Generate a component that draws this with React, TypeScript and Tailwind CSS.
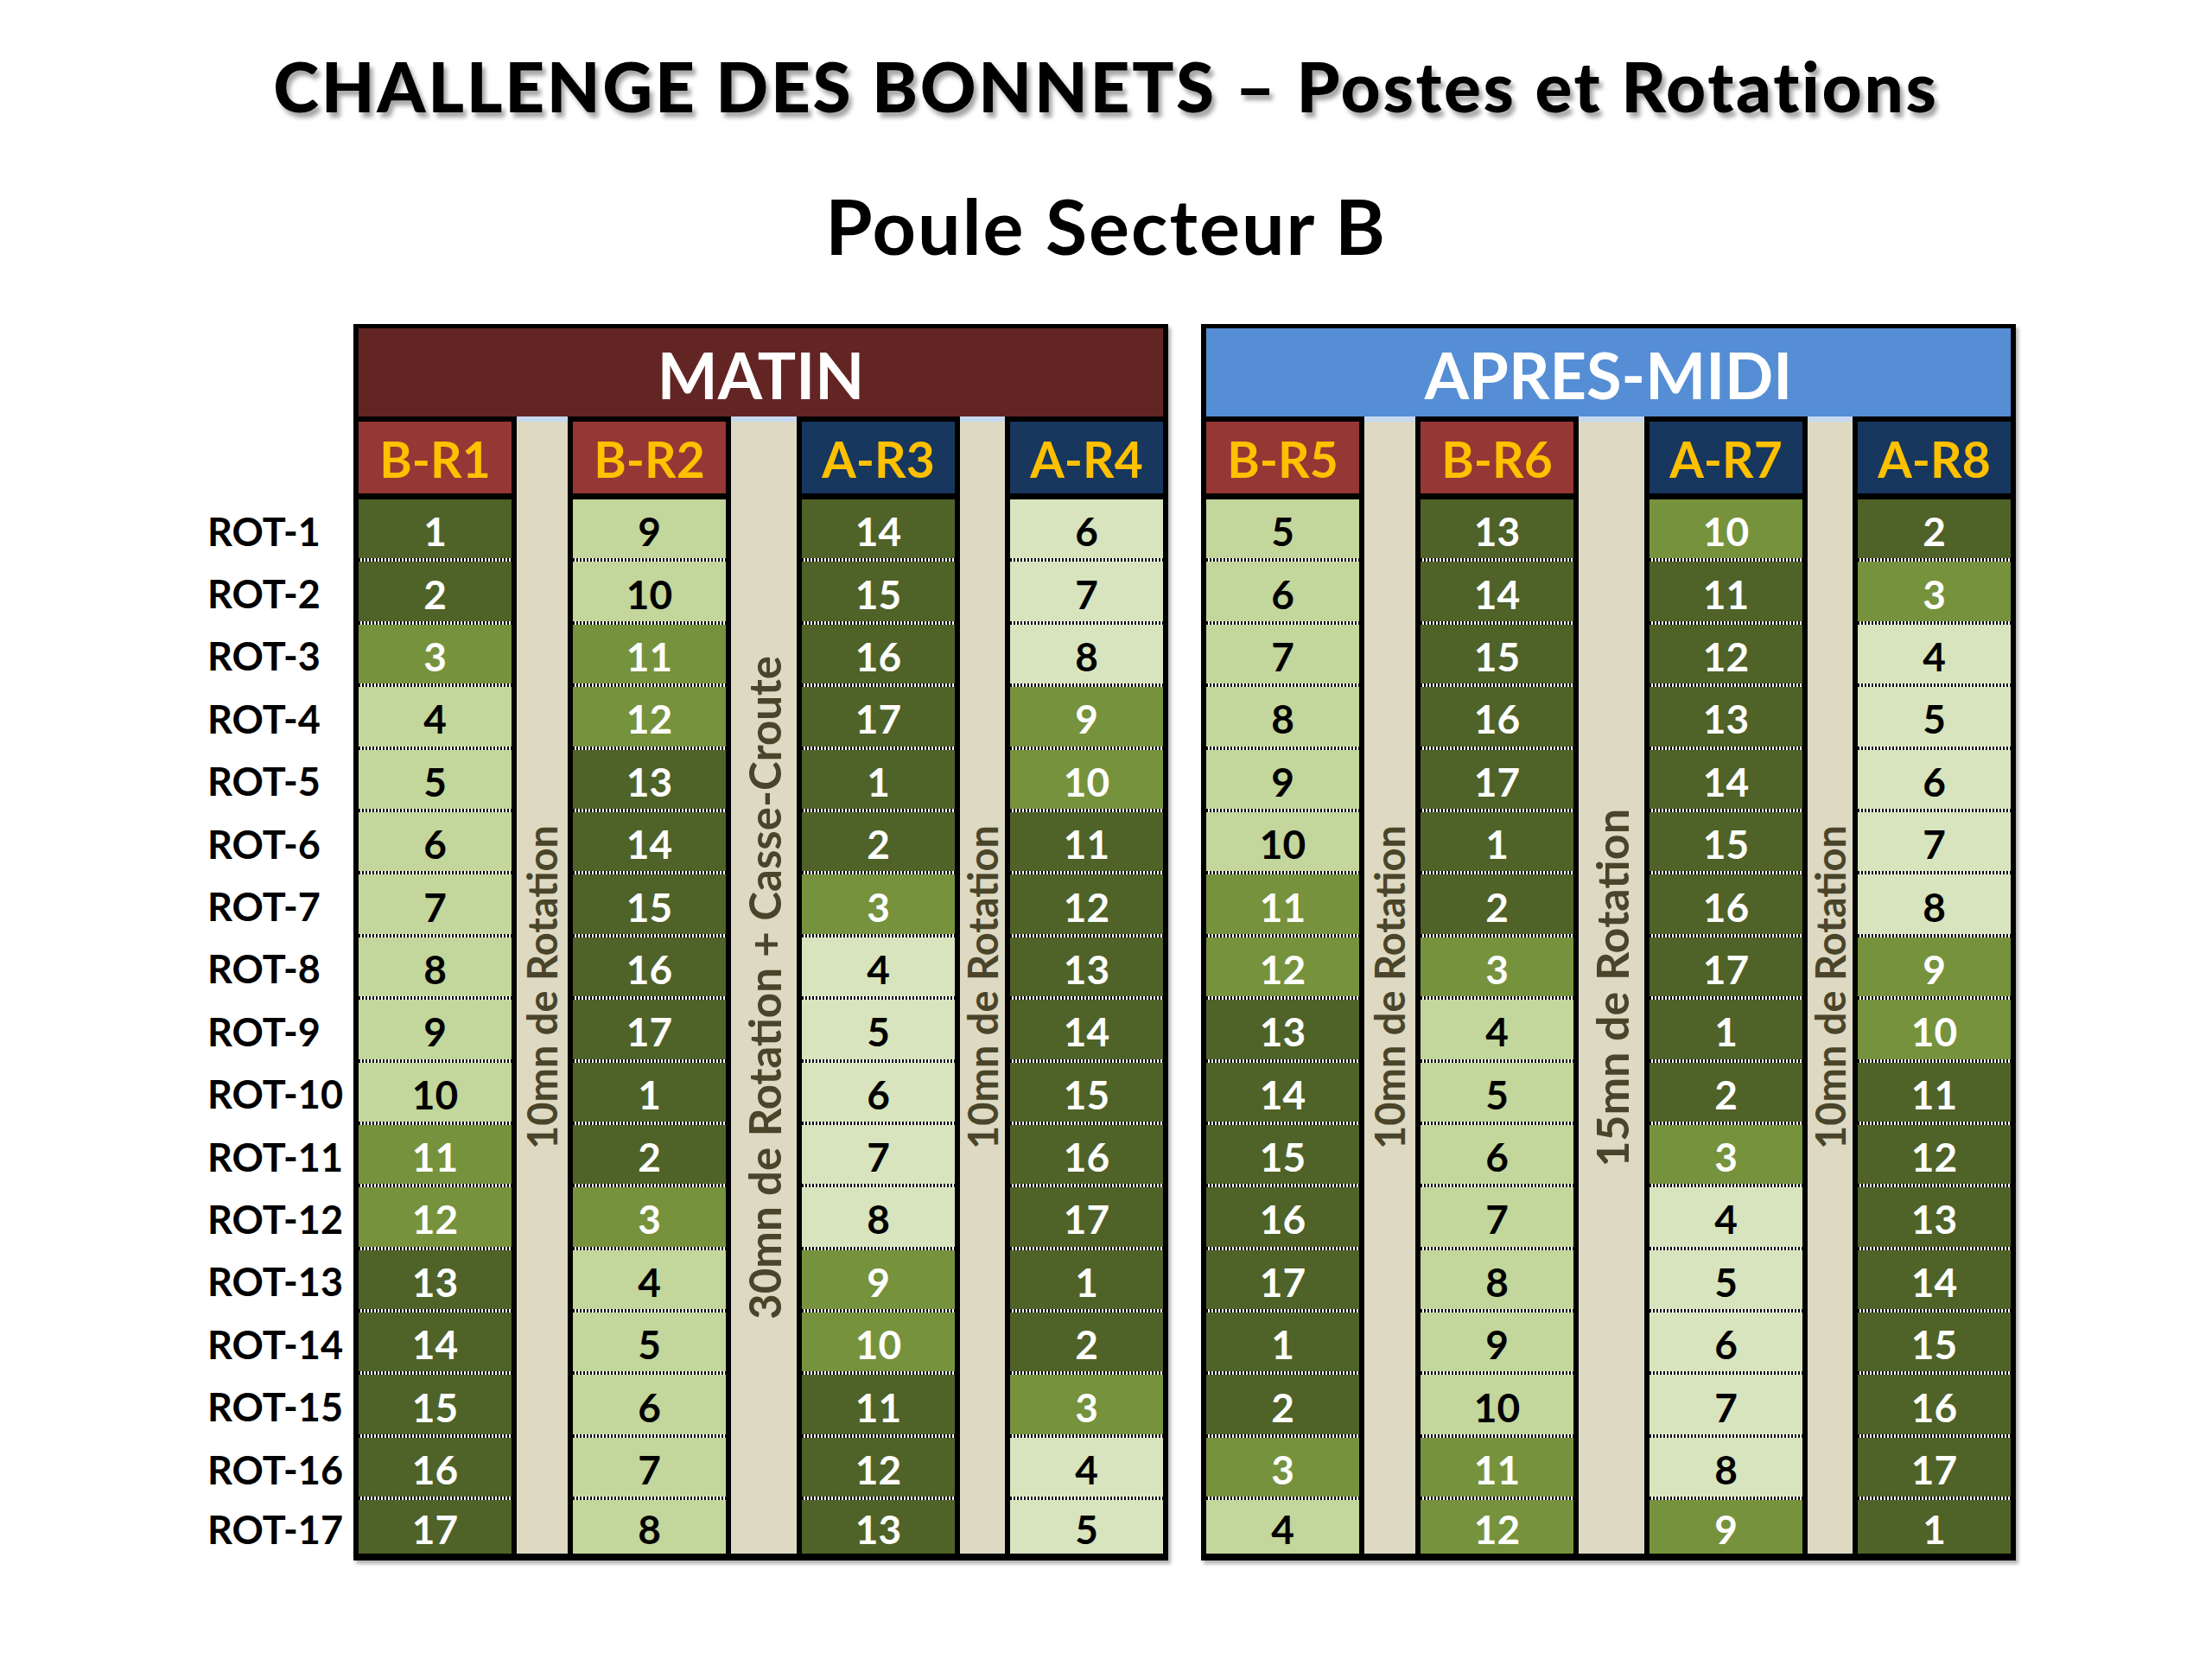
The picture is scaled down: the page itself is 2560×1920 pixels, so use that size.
import React from 'react';

type Sector = 'A' | 'B';
type Shade = 'D' | 'M' | 'L' | 'XL';

interface Column {
  label: string;
  sector: Sector;
  start: number;
}

interface Gap {
  width: string;
  text: string;
  size: string;
}

interface Session {
  title: string;
  band: string;
  columns: Column[];
  gaps: Gap[];
}

// Couleurs des cases (vert foncé -> vert très clair)
const SHADES: Record<Shade, string> = {
  D: 'bg-[#4f6228] text-white',
  M: 'bg-[#76923c] text-white',
  L: 'bg-[#c3d69b] text-black',
  XL: 'bg-[#d7e4bd] text-black',
};

const HEADER_BG: Record<Sector, string> = {
  A: 'bg-[#17375e]',
  B: 'bg-[#953735]',
};

// Teinte selon le poste et le secteur
const getShade = (value: number, sector: Sector): Shade => {
  if (value <= 2) return 'D';
  if (value === 3) return 'M';
  if (sector === 'B') {
    if (value <= 10) return 'L';
    if (value <= 12) return 'M';
    return 'D';
  }
  if (value <= 8) return 'XL';
  if (value <= 10) return 'M';
  return 'D';
};

const ROWS = Array.from({ length: 17 }, (_, i) => i);

const sessions: Session[] = [
  {
    title: 'MATIN',
    band: 'bg-[#632523]',
    columns: [
      { label: 'B-R1', sector: 'B', start: 1 },
      { label: 'B-R2', sector: 'B', start: 9 },
      { label: 'A-R3', sector: 'A', start: 14 },
      { label: 'A-R4', sector: 'A', start: 6 },
    ],
    gaps: [
      { width: 'w-[59px]', text: '10mn de Rotation', size: 'text-[47px]' },
      { width: 'w-[76px]', text: '30mn de Rotation + Casse-Croute', size: 'text-[51px]' },
      { width: 'w-[52px]', text: '10mn de Rotation', size: 'text-[47px]' },
    ],
  },
  {
    title: 'APRES-MIDI',
    band: 'bg-[#558ed5]',
    columns: [
      { label: 'B-R5', sector: 'B', start: 5 },
      { label: 'B-R6', sector: 'B', start: 13 },
      { label: 'A-R7', sector: 'A', start: 10 },
      { label: 'A-R8', sector: 'A', start: 2 },
    ],
    gaps: [
      { width: 'w-[59px]', text: '10mn de Rotation', size: 'text-[47px]' },
      { width: 'w-[76px]', text: '15mn de Rotation', size: 'text-[52px]' },
      { width: 'w-[52px]', text: '10mn de Rotation', size: 'text-[47px]' },
    ],
  },
];

const rowHeight = (i: number) => (i < 16 ? 'h-[72.4px]' : 'h-[61.6px]');

const Dots = () => (
  <div className="h-[4px] bg-[repeating-linear-gradient(90deg,#000_0px,#000_2px,#fff_2px,#fff_4px)]" />
);

const DataColumn = ({ column }: { column: Column }) => (
  <div className="w-[177px] flex flex-col pt-[6px]">
    <div
      className={`h-[83px] pt-[3px] ${HEADER_BG[column.sector]} flex items-center justify-center text-[#ffc000] text-[57px] font-bold leading-none`}
    >
      {column.label}
    </div>
    <div className="mt-[7px] flex flex-col">
      {ROWS.map((i) => {
        const value = ((column.start - 1 + i) % 17) + 1;
        const shade = SHADES[getShade(value, column.sector)];
        return (
          <div key={i} className={`${rowHeight(i)} flex flex-col ${shade}`}>
            <div className="flex-1 pt-[6px] flex items-center justify-center text-[46px] font-bold leading-none">
              {value}
            </div>
            {i < 16 && <Dots />}
          </div>
        );
      })}
    </div>
  </div>
);

const GapColumn = ({ gap }: { gap: Gap }) => (
  <div
    className={`${gap.width} bg-[#ddd9c3] border-t-[6px] border-[#c6d9f1] flex items-center justify-center`}
  >
    <span
      className={`[writing-mode:vertical-rl] rotate-180 whitespace-nowrap text-[#4a452a] font-bold leading-none ${gap.size}`}
    >
      {gap.text}
    </span>
  </div>
);

const SessionBox = ({ session }: { session: Session }) => (
  <div className="w-[943px] bg-black px-[6px] pt-[5px] pb-[8px] flex flex-col shadow-[3px_4px_4px_rgba(0,0,0,0.3)]">
    <div
      className={`h-[102px] pt-[6px] ${session.band} flex items-center justify-center text-white text-[74px] font-bold leading-none`}
    >
      {session.title}
    </div>
    <div className="flex gap-[6px]">
      <DataColumn column={session.columns[0]} />
      <GapColumn gap={session.gaps[0]} />
      <DataColumn column={session.columns[1]} />
      <GapColumn gap={session.gaps[1]} />
      <DataColumn column={session.columns[2]} />
      <GapColumn gap={session.gaps[2]} />
      <DataColumn column={session.columns[3]} />
    </div>
  </div>
);

export default function App() {
  return (
    <div className="w-[2560px] h-[1920px] bg-white font-['Lato','Noto_Sans',sans-serif] text-black">
      <h1 className="pt-[59px] text-center text-[80px] font-black tracking-[2.7px] leading-none text-black [text-shadow:4px_6px_5px_rgba(0,0,0,0.35)]">
        CHALLENGE DES BONNETS – Postes et Rotations
      </h1>
      <h2 className="mt-[78px] text-center text-[88px] font-bold tracking-[2px] leading-none">Poule Secteur B</h2>

      <div className="mt-[70px] pl-[240px] flex">
        {/* Libellés des rotations */}
        <div className="w-[169px] pt-[203px] flex flex-col">
          {ROWS.map((i) => (
            <div key={i} className={`${rowHeight(i)} flex flex-col`}>
              <div className="flex-1 pt-[6px] flex items-center text-[45px] font-bold leading-none">
                ROT-{i + 1}
              </div>
              {i < 16 && <div className="h-[4px]" />}
            </div>
          ))}
        </div>

        <div className="flex gap-[38px]">
          {sessions.map((s) => (
            <SessionBox key={s.title} session={s} />
          ))}
        </div>
      </div>
    </div>
  );
}
